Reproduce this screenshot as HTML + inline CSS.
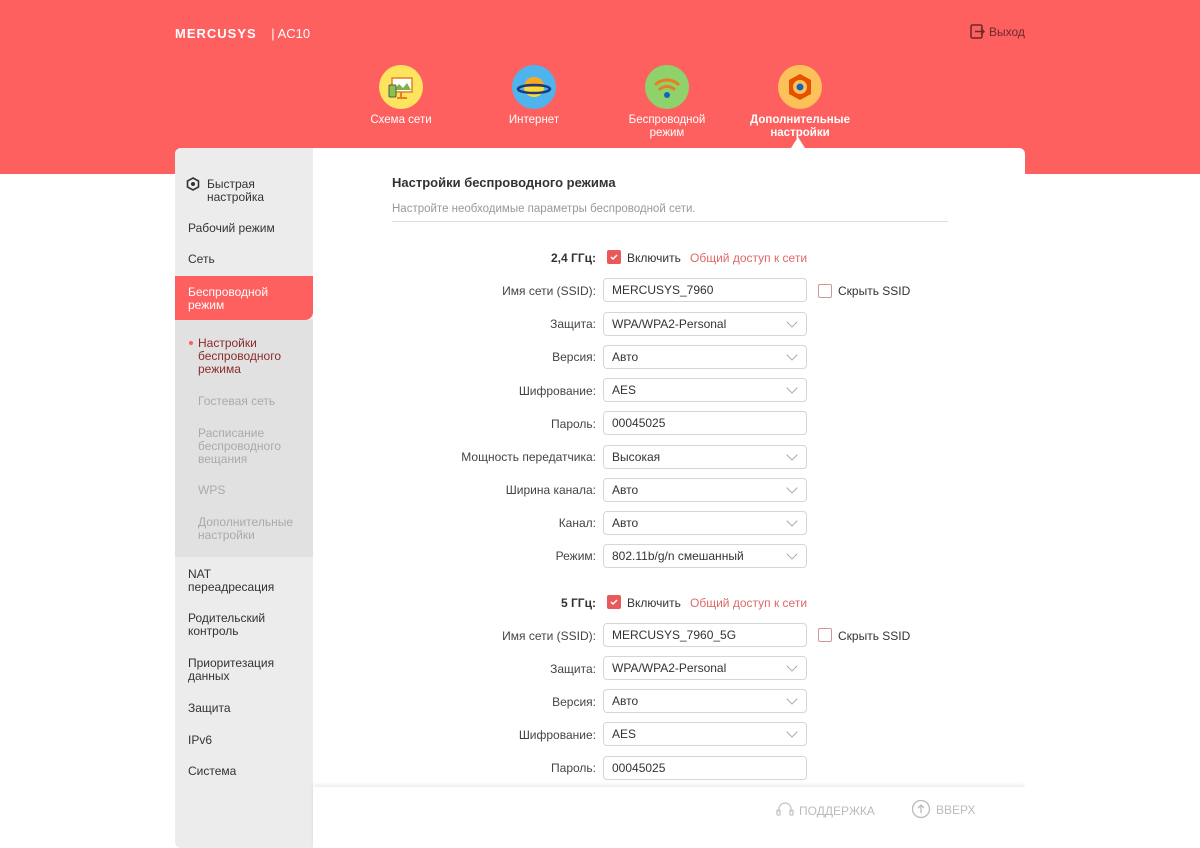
<!DOCTYPE html>
<html><head><meta charset="utf-8"><style>
*{box-sizing:border-box;margin:0;padding:0}
body{width:1200px;height:831px;overflow:hidden;background:#fff;font-family:"Liberation Sans",Arial,sans-serif;font-size:12px;color:#333;position:relative}
.hdr{position:absolute;left:0;top:0;width:1200px;height:174px;background:#fe5f5f}
.logo{position:absolute;left:175px;top:26px;color:#fff;font-weight:bold;font-size:13px;letter-spacing:1px}
.logo span{font-weight:normal;font-size:13px;margin-left:10px;letter-spacing:0}
.exit{position:absolute;left:970px;top:24px;color:#6a2a2a;font-size:12px}
.nav{position:absolute;top:65px;width:110px;text-align:center;color:#fff;font-size:11.5px;line-height:13px}
.nav .ic{width:44px;height:44px;border-radius:50%;margin:0 auto 5px;position:relative}
.card{position:absolute;left:175px;top:148px;width:850px;height:700px;background:#fff;border-radius:6px;overflow:hidden}
.side{position:absolute;left:0;top:0;width:138px;height:700px;background:#ececec}
.si{position:absolute;left:13px;font-size:12px;color:#333;line-height:13px}
.sub{position:absolute;left:0;top:172px;width:138px;height:237px;background:#e1e1e1}
.ssi{position:absolute;left:23px;color:#aaa;font-size:12px;line-height:13px}
.act{position:absolute;left:0;top:128px;width:138px;height:44px;background:#fe5f5f;border-radius:0 0 8px 0;color:#fff;padding:10px 13px;line-height:13px}
.ttl{position:absolute;left:217px;top:27px;font-size:13px;font-weight:bold;color:#333}
.subt{position:absolute;left:217px;top:55px;color:#999;font-size:11.5px}
.line{position:absolute;left:217px;top:73px;width:556px;height:1px;background:#ddd}
.lbl{position:absolute;width:200px;left:221px;text-align:right;font-size:12px;color:#444}
.inp{position:absolute;left:428px;width:204px;height:24px;border:1px solid #d6d6d6;border-radius:4px;padding:4px 8px;font-size:12px;color:#333}
.inp.sel::after{content:"";position:absolute;right:10px;top:5px;width:7px;height:7px;border-right:1px solid #aaa;border-bottom:1px solid #aaa;transform:rotate(45deg)}
.cb{position:absolute;width:14px;height:14px;border-radius:2px}
.foot{position:absolute;left:138px;top:639px;width:712px;height:60px;background:#fff;box-shadow:0 -2px 4px rgba(0,0,0,0.08)}
</style></head><body>
<div class="hdr">
<div class="logo">MERCUSYS <span>| AC10</span></div>
<div class="exit"><svg width="15" height="15" style="vertical-align:-3px;margin-right:4px" viewBox="0 0 15 15"><rect x="1" y="1" width="11" height="13" rx="1.5" fill="none" stroke="#6a2a2a" stroke-width="1.5"/><path d="M5 7.5h9M11 4.5l3 3-3 3" fill="none" stroke="#6a2a2a" stroke-width="1.5"/></svg>Выход</div>
<div class="nav" style="left:346px"><div class="ic" style="background:#fde45e"><svg width="44" height="44"><rect x="13" y="13" width="20" height="14" fill="#fff" stroke="#e67e22" stroke-width="1.5"/><path d="M15 25l5-6 4 4 4-5 4 7z" fill="#7cb342"/><rect x="10" y="20" width="7" height="12" rx="1" fill="#8bc34a" stroke="#555" stroke-width="1"/><path d="M22 27v6M18 33h10" stroke="#e67e22" stroke-width="2"/></svg></div>Схема сети</div>
<div class="nav" style="left:479px"><div class="ic" style="background:#4fb3ee"><svg width="44" height="44"><circle cx="22" cy="22" r="10" fill="#fdd835"/><path d="M22 12a10 10 0 0 1 10 10H12a10 10 0 0 1 10-10z" fill="#f9a825"/><ellipse cx="22" cy="24" rx="16" ry="4" fill="none" stroke="#1a3a7a" stroke-width="2.5"/></svg></div>Интернет</div>
<div class="nav" style="left:612px"><div class="ic" style="background:#8fd16a"><svg width="44" height="44" fill="none" stroke="#e67e22" stroke-width="3"><path d="M10 20a17 17 0 0 1 24 0"/><path d="M14 25a11 11 0 0 1 16 0"/><circle cx="22" cy="30" r="3" fill="#1565c0" stroke="none"/></svg></div>Беспроводной<br>режим</div>
<div class="nav" style="left:745px;font-weight:bold"><div class="ic" style="background:#fdc15a"><svg width="44" height="44"><path d="M22 9l11 6v14l-11 6-11-6V15z" fill="#e65100"/><circle cx="22" cy="22" r="7" fill="#fdc15a"/><circle cx="22" cy="22" r="3.5" fill="#1565c0"/></svg></div>Дополнительные<br>настройки</div>
</div>
<div style="position:absolute;left:791px;top:137px;width:0;height:0;border-left:7px solid transparent;border-right:7px solid transparent;border-bottom:11px solid #fff;z-index:3"></div>
<div class="card">
<div class="side">
<div class="si" style="top:30px;left:32px">Быстрая<br>настройка</div>
<svg style="position:absolute;left:11px;top:29px" width="14" height="14" viewBox="0 0 14 14"><path d="M7 1l5.5 3v6L7 13 1.5 10V4z" fill="none" stroke="#333" stroke-width="1.6"/><circle cx="7" cy="7" r="2" fill="#333"/></svg>
<div class="si" style="top:74px">Рабочий режим</div>
<div class="si" style="top:105px">Сеть</div>
<div class="act">Беспроводной<br>режим</div>
<div class="sub">
<div class="ssi" style="top:17px;color:#8a2b2b">Настройки<br>беспроводного<br>режима</div>
<div style="position:absolute;left:14px;top:21px;width:4px;height:4px;border-radius:50%;background:#fe5f5f"></div>
<div class="ssi" style="top:75px">Гостевая сеть</div>
<div class="ssi" style="top:107px">Расписание<br>беспроводного<br>вещания</div>
<div class="ssi" style="top:164px">WPS</div>
<div class="ssi" style="top:196px">Дополнительные<br>настройки</div>
</div>
<div class="si" style="top:420px">NAT<br>переадресация</div>
<div class="si" style="top:464px">Родительский<br>контроль</div>
<div class="si" style="top:509px">Приоритезация<br>данных</div>
<div class="si" style="top:554px">Защита</div>
<div class="si" style="top:586px">IPv6</div>
<div class="si" style="top:617px">Система</div>
</div>
<div class="ttl">Настройки беспроводного режима</div>
<div class="subt">Настройте необходимые параметры беспроводной сети.</div>
<div class="line"></div>

<div class="lbl" style="top:103px;font-weight:bold;color:#333">2,4 ГГц:</div>
<div class="cb" style="left:432px;top:102px;background:#e85a5a"><svg width="14" height="14"><path d="M4 7l2 2 4-4" stroke="#fff" stroke-width="1.5" fill="none"/></svg></div>
<div style="position:absolute;left:452px;top:103px">Включить</div>
<div style="position:absolute;left:515px;top:103px;color:#e06868">Общий доступ к сети</div>
<div class="lbl" style="top:136px">Имя сети (SSID):</div><div class="inp" style="top:130px">MERCUSYS_7960</div>
<div class="cb" style="left:643px;top:136px;border:1px solid #c99"></div><div style="position:absolute;left:663px;top:136px">Скрыть SSID</div>
<div class="lbl" style="top:169px">Защита:</div><div class="inp sel" style="top:164px">WPA/WPA2-Personal</div>
<div class="lbl" style="top:202px">Версия:</div><div class="inp sel" style="top:197px">Авто</div>
<div class="lbl" style="top:236px">Шифрование:</div><div class="inp sel" style="top:230px">AES</div>
<div class="lbl" style="top:269px">Пароль:</div><div class="inp" style="top:263px">00045025</div>
<div class="lbl" style="top:302px">Мощность передатчика:</div><div class="inp sel" style="top:297px">Высокая</div>
<div class="lbl" style="top:335px">Ширина канала:</div><div class="inp sel" style="top:330px">Авто</div>
<div class="lbl" style="top:368px">Канал:</div><div class="inp sel" style="top:363px">Авто</div>
<div class="lbl" style="top:401px">Режим:</div><div class="inp sel" style="top:396px">802.11b/g/n смешанный</div>

<div class="lbl" style="top:448px;font-weight:bold;color:#333">5 ГГц:</div>
<div class="cb" style="left:432px;top:447px;background:#e85a5a"><svg width="14" height="14"><path d="M4 7l2 2 4-4" stroke="#fff" stroke-width="1.5" fill="none"/></svg></div>
<div style="position:absolute;left:452px;top:448px">Включить</div>
<div style="position:absolute;left:515px;top:448px;color:#e06868">Общий доступ к сети</div>
<div class="lbl" style="top:481px">Имя сети (SSID):</div><div class="inp" style="top:475px">MERCUSYS_7960_5G</div>
<div class="cb" style="left:643px;top:480px;border:1px solid #c99"></div><div style="position:absolute;left:663px;top:481px">Скрыть SSID</div>
<div class="lbl" style="top:514px">Защита:</div><div class="inp sel" style="top:508px">WPA/WPA2-Personal</div>
<div class="lbl" style="top:547px">Версия:</div><div class="inp sel" style="top:541px">Авто</div>
<div class="lbl" style="top:580px">Шифрование:</div><div class="inp sel" style="top:574px">AES</div>
<div class="lbl" style="top:613px">Пароль:</div><div class="inp" style="top:608px">00045025</div>

<div class="foot">
<div style="position:absolute;left:462px;top:14px;color:#bbb;font-size:12px"><svg width="20" height="18" style="vertical-align:-4px;margin-right:4px" fill="none" stroke="#ccc" stroke-width="1.5"><path d="M4 11V8a6 6 0 0 1 12 0v3"/><rect x="2" y="9" width="3" height="5" rx="1"/><rect x="15" y="9" width="3" height="5" rx="1"/></svg>ПОДДЕРЖКА</div>
<div style="position:absolute;left:598px;top:12px;color:#bbb;font-size:12px"><svg width="20" height="20" style="vertical-align:-5px;margin-right:5px" fill="none" stroke="#bbb" stroke-width="1.3"><circle cx="10" cy="10" r="8.5"/><path d="M10 14V6M7 9l3-3 3 3"/></svg>ВВЕРХ</div>
</div>
</div>
</body></html>
